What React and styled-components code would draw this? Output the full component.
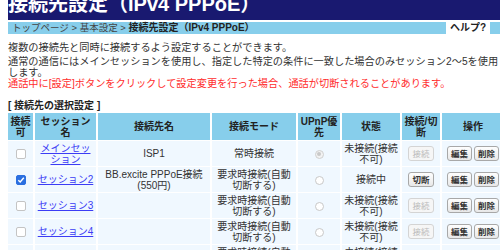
import React from 'react';
import styled, { createGlobalStyle } from 'styled-components';

const GlobalStyle = createGlobalStyle`
  html, body {
    margin: 0;
    padding: 0;
    overflow: hidden;
    background: #fff;
  }
  body {
    font-family: "Liberation Sans", "Noto Sans CJK JP", sans-serif;
    color: #333;
  }
`;

const Page = styled.div`
  width: 492px;
  padding-left: 8px;
`;

const TitleBar = styled.div`
  height: 20px;
  width: 520px;
  background: #191970;
  overflow: hidden;
`;

const Title = styled.h1`
  margin: -4px 0 0;
  font-size: 20px;
  line-height: 16px;
  font-weight: bold;
  color: #fff;
  white-space: nowrap;
`;

const Crumbs = styled.div`
  margin-top: 2px;
  height: 12px;
  width: 492px;
  background: #87ceeb;
  display: flex;
  align-items: center;
  justify-content: space-between;
`;

const CrumbPath = styled.div`
  font-size: 9.5px;
  line-height: 12px;
  padding-left: 4px;
  color: #444;
  white-space: nowrap;

  b {
    font-size: 10px;
    color: #222;
  }
`;

const Help = styled.div`
  height: 12px;
  line-height: 12px;
  margin-right: 10px;
  padding: 0 4px;
  background: #fff;
  font-size: 10px;
  font-weight: bold;
  color: #222;
`;

const Desc = styled.div`
  margin-top: 8px;
  font-size: 10.2px;
  line-height: 11px;
  white-space: nowrap;
`;

const Lead = styled.div`
  margin-bottom: 3px;
`;

const Warn = styled.div`
  color: #ff2d2d;
`;

const SectionTitle = styled.div`
  margin-top: 11px;
  font-size: 10px;
  line-height: 12px;
  font-weight: bold;
  color: #222;
`;

const Table = styled.table`
  table-layout: fixed;
  width: 500px;
  border-spacing: 2px 1px;
  margin-left: -2px;
  font-size: 10px;
  line-height: 11px;
`;

const Th = styled.th`
  height: 27px;
  padding: 0 2px;
  background: #87ceeb;
  color: #222;
  font-weight: bold;
  text-align: center;
  vertical-align: middle;
`;

const Td = styled.td`
  height: 25px;
  padding: 0 2px;
  background: #f0f8ff;
  text-align: center;
  vertical-align: middle;
  color: #333;
`;

const SessionLink = styled.a`
  color: #3c3cf5;
  text-decoration: underline;
  cursor: pointer;
`;

const Box = styled.span`
  display: inline-block;
  vertical-align: middle;
  width: 10px;
  height: 10px;
  box-sizing: border-box;
  border-radius: 2px;
  border: 1px solid ${(p) => (p.$checked ? '#2b6fe0' : '#c4c4c4')};
  background: ${(p) => (p.$checked ? '#2b6fe0' : '#fff')};

  svg {
    display: block;
    width: 8px;
    height: 8px;
  }
`;

const Radio = styled.span`
  vertical-align: middle;
  width: 9px;
  height: 9px;
  box-sizing: border-box;
  border-radius: 50%;
  border: 1px solid ${(p) => (p.$disabled ? '#d0d0d0' : '#c8c8c8')};
  background: ${(p) => (p.$disabled ? '#f2f2f2' : '#fff')};
  display: inline-flex;
  align-items: center;
  justify-content: center;

  &::after {
    content: '';
    display: ${(p) => (p.$checked ? 'block' : 'none')};
    width: 4px;
    height: 4px;
    border-radius: 50%;
    background: #c9c9c9;
  }
`;

const Btn = styled.button`
  font-family: inherit;
  font-size: 8.5px;
  line-height: 10px;
  height: 15px;
  padding: 1px 3px;
  margin: 0 1px;
  border-radius: 3px;
  border: 1px solid ${(p) => (p.disabled ? '#d4d4d4' : '#a8a8a8')};
  background: ${(p) => (p.disabled ? '#f6f6f6' : 'linear-gradient(#fefefe, #e8e8e8)')};
  color: ${(p) => (p.disabled ? '#bbb' : '#333')};
  font-weight: ${(p) => (p.disabled ? 'normal' : 'bold')};
  vertical-align: middle;
`;

const Check = ({ checked }) => (
  <Box $checked={checked}>
    {checked ? (
      <svg viewBox="0 0 8 8">
        <path d="M1.3 4.2 L3.2 6 L6.8 1.8" fill="none" stroke="#fff" strokeWidth="1.4" />
      </svg>
    ) : null}
  </Box>
);

const rows = [
  {
    enabled: false,
    name: <>メインセッ<br />ション</>,
    dest: 'ISP1',
    mode: '常時接続',
    upnp: 'fixed',
    state: <>未接続(接続<br />不可)</>,
    action: { label: '接続', disabled: true },
  },
  {
    enabled: true,
    name: 'セッション2',
    dest: <>BB.excite PPPoE接続<br />(550円)</>,
    mode: <>要求時接続(自動<br />切断する)</>,
    upnp: 'off',
    state: '接続中',
    action: { label: '切断', disabled: false },
  },
  {
    enabled: false,
    name: 'セッション3',
    dest: '',
    mode: <>要求時接続(自動<br />切断する)</>,
    upnp: 'off',
    state: <>未接続(接続<br />不可)</>,
    action: { label: '接続', disabled: true },
  },
  {
    enabled: false,
    name: 'セッション4',
    dest: '',
    mode: <>要求時接続(自動<br />切断する)</>,
    upnp: 'off',
    state: <>未接続(接続<br />不可)</>,
    action: { label: '接続', disabled: true },
  },
  {
    enabled: false,
    name: 'セッション5',
    dest: '',
    mode: <>要求時接続(自動<br />切断する)</>,
    upnp: 'off',
    state: <>未接続(接続<br />不可)</>,
    action: { label: '接続', disabled: true },
  },
];

const widths = [25, 61, 112, 84, 42, 58, 38, 62];

const App = () => (
  <>
    <GlobalStyle />
    <Page>
      <TitleBar>
        <Title>接続先設定（IPv4 PPPoE）</Title>
      </TitleBar>
      <Crumbs>
        <CrumbPath>
          トップページ &gt; 基本設定 &gt; <b>接続先設定（IPv4 PPPoE）</b>
        </CrumbPath>
        <Help>ヘルプ?</Help>
      </Crumbs>
      <Desc>
        <Lead>複数の接続先と同時に接続するよう設定することができます。</Lead>
        <div>通常の通信にはメインセッションを使用し、指定した特定の条件に一致した場合のみセッション2〜5を使用</div>
        <div>します。</div>
        <Warn>通話中に[設定]ボタンをクリックして設定変更を行った場合、通話が切断されることがあります。</Warn>
      </Desc>
      <SectionTitle>[ 接続先の選択設定 ]</SectionTitle>
      <Table>
        <colgroup>
          {widths.map((w, i) => (
            <col key={i} style={{ width: w }} />
          ))}
        </colgroup>
        <thead>
          <tr>
            <Th>接続<br />可</Th>
            <Th>セッション<br />名</Th>
            <Th>接続先名</Th>
            <Th>接続モード</Th>
            <Th>UPnP優<br />先</Th>
            <Th>状態</Th>
            <Th>接続/切<br />断</Th>
            <Th>操作</Th>
          </tr>
        </thead>
        <tbody>
          {rows.map((r, i) => (
            <tr key={i}>
              <Td><Check checked={r.enabled} /></Td>
              <Td><SessionLink>{r.name}</SessionLink></Td>
              <Td>{r.dest}</Td>
              <Td>{r.mode}</Td>
              <Td>
                <Radio $checked={r.upnp === 'fixed'} $disabled={r.upnp === 'fixed'} />
              </Td>
              <Td>{r.state}</Td>
              <Td><Btn disabled={r.action.disabled}>{r.action.label}</Btn></Td>
              <Td>
                <Btn>編集</Btn>
                <Btn>削除</Btn>
              </Td>
            </tr>
          ))}
        </tbody>
      </Table>
    </Page>
  </>
);

export default App;
